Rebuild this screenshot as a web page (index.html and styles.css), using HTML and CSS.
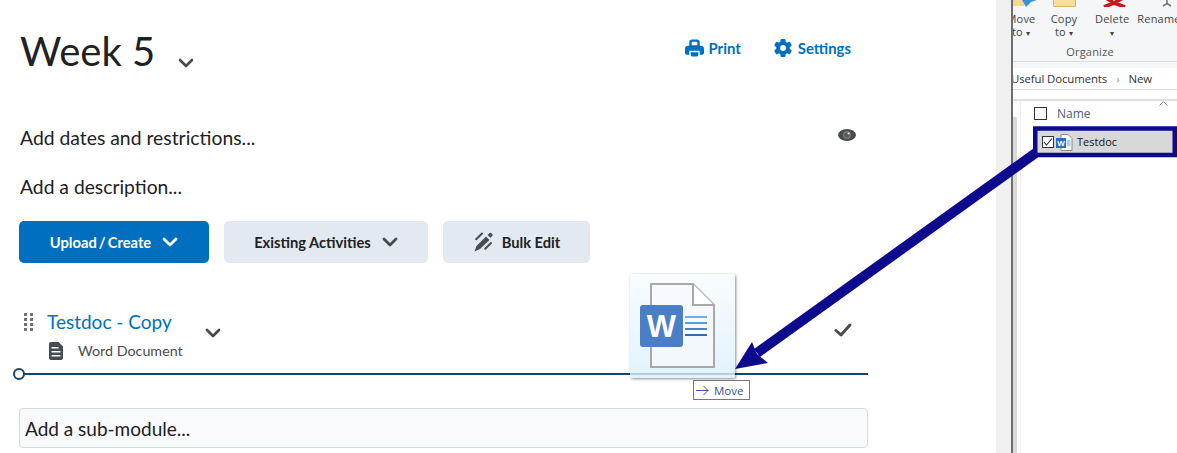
FILE: index.html
```html
<!DOCTYPE html>
<html lang="en">
<head>
<meta charset="utf-8">
<title>Week 5</title>
<link rel="stylesheet" href="styles.css">
</head>
<body>
<div class="desktop">
  <main class="page">
    <header class="head">
      <h1 class="title">Week 5</h1>
      <svg class="title-caret" width="16" height="10" viewBox="0 0 16 10"><path d="M2 2l6 6 6-6" fill="none" stroke="#494c4e" stroke-width="2.600" stroke-linecap="round" stroke-linejoin="round"/></svg>
      <nav class="head-links">
        <a class="link link-print">
          <svg width="19" height="18" viewBox="0 0 20 18"><path fill="#006fbf" fill-rule="evenodd" d="M4.500 6.500V3a3 3 0 0 1 3-3h5a3 3 0 0 1 3 3v3.500h1A3.500 3.500 0 0 1 20 10v4a2 2 0 0 1-2 2h-2.500v-4h-11v4H2a2 2 0 0 1-2-2v-4a3.500 3.500 0 0 1 3.500-3.500zm2.500-.500h6V3.500a1 1 0 0 0-1-1H8a1 1 0 0 0-1 1zM6 13.500h8V16a2 2 0 0 1-2 2H8a2 2 0 0 1-2-2z"/></svg>
          Print
        </a>
        <a class="link">
          <svg width="18" height="18" viewBox="0 0 18 18"><g fill="#006fbf"><rect x="6.500" y="0" width="5" height="18" rx="1.200"/><rect x="6.500" y="0" width="5" height="18" rx="1.200" transform="rotate(60 9 9)"/><rect x="6.500" y="0" width="5" height="18" rx="1.200" transform="rotate(120 9 9)"/><circle cx="9" cy="9" r="6.800"/></g><circle cx="9" cy="9" r="2.900" fill="#fff"/></svg>
          Settings
        </a>
      </nav>
    </header>
    <div class="row-dates">
      <span>Add dates and restrictions...</span>
      <svg class="eye" width="18" height="12" viewBox="0 0 18 12"><ellipse cx="9" cy="6" rx="9" ry="6" fill="#494c4e"/><circle cx="9" cy="6" r="3.800" fill="#8a8d8f"/><circle cx="9" cy="6" r="2.800" fill="#55585a"/><circle cx="10.500" cy="4.500" r="1" fill="#fff"/></svg>
    </div>
    <p class="desc">Add a description...</p>
    <div class="actions">
      <button class="btn primary"><span class="tight">Upload / Create</span>
        <svg width="16" height="10" viewBox="0 0 16 10"><path d="M2 2l6 6 6-6" fill="none" stroke="#fff" stroke-width="2.800" stroke-linecap="round" stroke-linejoin="round"/></svg>
      </button>
      <button class="btn secondary wide">Existing Activities
        <svg width="16" height="10" viewBox="0 0 16 10"><path d="M2 2l6 6 6-6" fill="none" stroke="#494c4e" stroke-width="2.800" stroke-linecap="round" stroke-linejoin="round"/></svg>
      </button>
      <button class="btn secondary bulk">
        <svg width="20" height="20" viewBox="0 0 20 20"><path fill="#494c4e" d="M13 4.500l3.500 3.500L7 17l-5.500 2.500L3.500 14zM14.500 3l1.800-1.800a1.500 1.500 0 0 1 2 0l.9.9a1.500 1.500 0 0 1 0 2L17.500 5.800z"/><path d="M9 1.500L3.200 7.300M18 11l-5.800 5.800" fill="none" stroke="#494c4e" stroke-width="2" stroke-linecap="round"/></svg>
        Bulk Edit
      </button>
    </div>
    <section class="item">
      <svg class="grip" width="10" height="18" viewBox="0 0 10 18"><g fill="#6e7376"><rect x="0" y="0" width="3" height="3"/><rect x="6" y="0" width="3" height="3"/><rect x="0" y="5" width="3" height="3"/><rect x="6" y="5" width="3" height="3"/><rect x="0" y="10" width="3" height="3"/><rect x="6" y="10" width="3" height="3"/><rect x="0" y="15" width="3" height="3"/><rect x="6" y="15" width="3" height="3"/></g></svg>
      <div class="item-body">
        <a class="item-title">Testdoc - Copy</a>
        <div class="item-type">
          <svg width="14" height="18" viewBox="0 0 14 18"><path fill="#494c4e" fill-rule="evenodd" d="M2 0h7.500L14 4.500V16a2 2 0 0 1-2 2H2a2 2 0 0 1-2-2V2a2 2 0 0 1 2-2zM2.500 5v1.500h7V5zm0 4v1.500h9V9zm0 4v1.500h9V13z"/></svg>
          <span>Word Document</span>
        </div>
      </div>
      <svg class="item-caret" width="16" height="10" viewBox="0 0 16 10"><path d="M2 2l6 6 6-6" fill="none" stroke="#494c4e" stroke-width="2.800" stroke-linecap="round" stroke-linejoin="round"/></svg>
      <svg class="item-check" width="18" height="14" viewBox="0 0 18 14"><path d="M2 7.500l5 4.500 9-10" fill="none" stroke="#494c4e" stroke-width="3" stroke-linecap="round" stroke-linejoin="round"/></svg>
    </section>
    <div class="drop-line"><span class="drop-dot"></span></div>
    <div class="submodule">Add a sub-module...</div>
  </main>
  <div class="gutter"></div>
  <aside class="explorer">
    <div class="ribbon">
      <div class="ribbon-icons">
        <svg class="ic-move" width="24" height="8" viewBox="0 0 24 8"><path d="M0 0h11v6H0z" fill="#f6d98a"/><path d="M9 0h15l-6 2-5 5z" fill="#3d8fd6"/></svg>
        <svg class="ic-copy" width="23" height="8" viewBox="0 0 23 8"><path d="M.5 0v6.500h22V0" fill="#f8df98" stroke="#d9b75e"/></svg>
        <svg class="ic-del" width="25" height="7" viewBox="0 0 25 7"><path d="M4 -2l8 5 9-5M12 3L2 7M12 3l11 4" fill="none" stroke="#c8171e" stroke-width="3.600"/></svg>
        <svg class="ic-ren" width="10" height="7" viewBox="0 0 10 7"><path d="M5 0v4M1 6l4-2.500L9 6" fill="none" stroke="#777" stroke-width="1.600"/></svg>
      </div>
      <div class="ribbon-labels">
        <span class="r-label r-move">Move<br>to <i>▾</i></span>
        <span class="r-label r-copy">Copy<br>to <i>▾</i></span>
        <span class="r-sep"></span>
        <span class="r-label r-del">Delete<br><i>▾</i></span>
        <span class="r-label r-ren">Rename</span>
      </div>
      <div class="r-group">Organize</div>
    </div>
    <div class="crumbs"><span class="c-first">Useful Documents</span><span class="c-sep">›</span><span>New</span></div>
    <div class="list">
      <div class="nav"><span class="nav-thumb"></span></div>
      <div class="list-main">
        <div class="list-head"><span class="cb"></span><span class="name-h">Name</span>
          <svg class="sort" width="9" height="5" viewBox="0 0 9 5"><path d="M.5 4.500l4-4 4 4" fill="none" stroke="#8a8a8a"/></svg>
        </div>
        <div class="file">
          <span class="cb checked"><svg width="10" height="10" viewBox="0 0 10 10"><path d="M1 5l2.500 3L9 1.500" fill="none" stroke="#222" stroke-width="1.100"/></svg></span>
          <svg width="17" height="17" viewBox="0 0 17 17"><path d="M5 .5h7l4 4v12H5z" fill="#fff" stroke="#8a8a8a"/><rect x="0" y="4" width="10" height="10" fill="#2b6cc4"/><text x="5" y="12" class="mini-w">W</text><path d="M11 7h3.500M11 9h3.500M11 11h3.500" stroke="#5a9bd8"/></svg>
          <span class="file-name">Testdoc</span>
        </div>
      </div>
    </div>
  </aside>
  <div class="drag-ghost">
    <svg width="80" height="94" viewBox="0 0 80 94"><path d="M11 1h42l21 21v62H11z" fill="#f7fafc" fill-opacity=".7" stroke="#a8a8a8" stroke-width="2"/><path d="M53 1v21h21" fill="#fff" stroke="#a8a8a8" stroke-width="2"/><rect x="0" y="22" width="43" height="42" rx="3" fill="#4a7fc8"/><text x="21.500" y="54" class="big-w">W</text><path d="M45 34h22" stroke="#6fb0e8" stroke-width="2"/><path d="M45 40h22" stroke="#5c9bd9" stroke-width="2"/><path d="M45 46h22" stroke="#4d82c5" stroke-width="2"/><path d="M45 52h22" stroke="#3d68ae" stroke-width="2"/></svg>
  </div>
  <div class="drag-tip"><svg width="13" height="11" viewBox="0 0 13 11"><path d="M0 5.500h12M7.500 1L12 5.500 7.500 10" fill="none" stroke="#3a4f9c" stroke-width="1"/></svg>Move</div>
  <svg class="callout" width="1177" height="453" viewBox="0 0 1177 453">
    <path d="M1037 152L757 353" stroke="#0d0a8e" stroke-width="10" fill="none"/>
    <path d="M735 369l17-27 5 12 11 9z" fill="#0d0a8e"/>
    <rect x="1035.250" y="128.500" width="139.500" height="26.500" fill="none" stroke="#0d0a8e" stroke-width="4.500"/>
  </svg>
</div>
</body>
</html>
```
FILE: styles.css
```css
* { box-sizing: border-box; }
html, body { margin: 0; height: 100%; background: #fff; }
body { font-family: Lato, "Liberation Sans", sans-serif; color: #202122; overflow: hidden; }
.desktop { position: relative; display: flex; width: 1177px; height: 453px; overflow: hidden; }

.page { width: 996px; flex: none; padding-left: 19px; }
.head { display: flex; align-items: flex-start; height: 118px; width: 832px; padding-top: 25px; }
.title { margin: 0 0 0 1px; font-size: 40px; line-height: 52px; font-weight: 400; }
.title-caret { margin: 33px 0 0 23px; }
.head-links { margin-left: auto; display: flex; gap: 33px; padding-top: 13px; }
.link { display: flex; align-items: center; gap: 6px; color: #006fbf; font-size: 14.900px; font-weight: 700; line-height: 20px; }
.link-print { gap: 5px; }

.row-dates { display: flex; justify-content: space-between; align-items: flex-start; width: 837px; padding-left: 1px; font-size: 19.350px; line-height: 40px; height: 40px; }
.eye { margin-top: 11px; }
.desc { margin: 0; padding-left: 1px; font-size: 19.300px; line-height: 40px; height: 63px; padding-top: 9px; }

.actions { display: flex; gap: 15px; height: 42px; }
.btn { height: 42px; border: 0; border-radius: 5px; font-family: inherit; font-size: 14.700px; font-weight: 700; display: flex; align-items: center; justify-content: center; padding: 0; }
.tight { word-spacing: -1.500px; }
.primary { width: 190px; background: #006fbf; color: #fff; gap: 11px; }
.secondary { background: #e3e9f1; color: #202122; }
.wide { width: 204px; gap: 11px; }
.bulk { width: 147px; gap: 9px; }

.item { position: relative; display: flex; height: 70px; margin-top: 41px; width: 849px; }
.grip { margin: 9px 0 0 5px; flex: none; }
.item-body { margin-left: 13px; }
.item-title { display: block; color: #006fbf; font-size: 19px; line-height: 36px; height: 32px; }
.item-type { display: flex; align-items: center; gap: 15px; margin-left: 2px; font-size: 14.300px; color: #494c4e; line-height: 20px; margin-top: 5px; }
.item-caret { margin: 24px 0 0 22px; }
.item-check { margin: 19px 16px 0 auto; }

.drop-line { position: relative; width: 849px; height: 2px; background: #17456e; margin-top: -1px; }
.drop-dot { position: absolute; left: -6px; top: -5px; width: 12px; height: 12px; border-radius: 50%; border: 2px solid #17456e; background: #fff; }

.submodule { width: 849px; height: 40px; margin-top: 33px; padding: 0 5px; border: 1px solid #d5dbe3; border-radius: 4px; background: #f9fafc; font-size: 19px; line-height: 40px; }

.gutter { width: 17px; flex: none; background: #f0f0f0; border-right: 2px solid #6f6f6f; }

.explorer { flex: 1; min-width: 0; overflow: hidden; background: #fff; font-family: "Open Sans", "Liberation Sans", sans-serif; font-size: 12px; color: #333; }
.ribbon { height: 62px; background: #f5f6f7; border-bottom: 1px solid #dadbdc; }
.ribbon-icons { display: flex; height: 12px; align-items: flex-start; }
.ic-copy { margin-left: 16px; }
.ic-del { margin-left: 26px; }
.ic-ren { margin-left: 35px; }
.ribbon-labels { display: flex; margin-left: -11px; height: 30px; }
.r-label { font-size: 11px; line-height: 13px; letter-spacing: .2px; text-align: center; color: #444; flex: none; }
.r-label i { font-style: normal; font-size: 8px; }
.r-move { width: 38px; }
.r-copy { width: 38px; margin-left: 5px; }
.r-sep { width: 1px; height: 33px; background: #e2e3e4; margin: 0 7px 0 5px; }
.r-del { width: 34px; }
.r-ren { width: 44px; margin-left: 8px; }
.r-group { text-align: center; font-size: 11px; letter-spacing: .2px; color: #555; line-height: 16px; padding-right: 10px; margin-top: 2px; }
.crumbs { height: 28px; display: flex; align-items: center; gap: 9px; margin-left: -2px; border-top: 6px solid #f5f6f7; border-bottom: 1px solid #dfdfdf; font-size: 11.400px; letter-spacing: -.1px; }
.c-sep { color: #999; }
.list { display: flex; border-top: 2px solid #e0e0e0; margin-top: 9px; }
.nav { width: 8px; flex: none; height: 352px; padding: 16px 3px 0 0; border-right: 1px solid #eee; }
.nav-thumb { display: block; height: 100%; background: #d9d9d9; }
.list-main { flex: 1; min-width: 0; }
.list-head { display: flex; align-items: center; height: 24px; padding-left: 13px; gap: 10px; color: #4c607a; }
.sort { align-self: flex-start; margin: 0 9px 0 auto; }
.cb { width: 13px; height: 13px; border: 1px solid #333; background: #fff; flex: none; display: inline-flex; }
.checked { width: 12px; height: 12px; }
.file { display: flex; align-items: center; gap: 2px; margin: 5px 0 0 15px; height: 24px; background: #d8d8d8; padding-left: 6px; }
.file-name { margin-left: 2px; padding-bottom: 2px; color: #111; font-size: 11px; }
.mini-w { font: 700 8px "Liberation Sans", sans-serif; fill: #fff; text-anchor: middle; }

.drag-ghost { position: absolute; left: 630px; top: 274px; width: 105px; height: 104px; border-radius: 2px; background: linear-gradient(rgba(248,251,253,.85), rgba(219,240,251,.8)); box-shadow: 1px 1px 3px rgba(0,0,0,.45); padding: 9px 0 0 10px; }
.big-w { font: 700 31px "Liberation Sans", sans-serif; fill: #fff; text-anchor: middle; }
.drag-tip { position: absolute; left: 693px; top: 380px; width: 57px; height: 20px; display: flex; align-items: center; gap: 5px; padding-left: 2px; background: #fff; border: 1px solid #777; color: #3a4f9c; font-size: 11.500px; font-family: "Open Sans", sans-serif; }
.callout { position: absolute; left: 0; top: 0; pointer-events: none; }
```
